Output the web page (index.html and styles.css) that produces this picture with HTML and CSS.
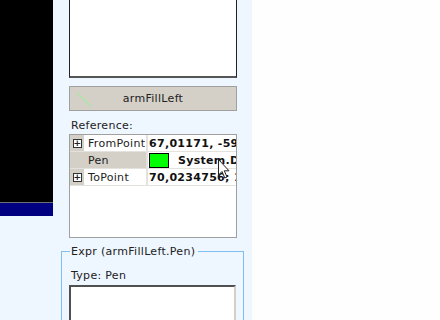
FILE: index.html
```html
<!DOCTYPE html>
<html>
<head>
    <title>armFillLeft</title>
    <link rel="stylesheet" href="styles.css">
</head>
<body>
    <div class="layout">
        <div class="preview">
            <div class="canvas"></div>
            <div class="scrollbar"></div>
        </div>

        <div class="panel">
            <div class="shape-box"></div>

            <button class="shape-button">
                <svg class="shape-icon" width="16" height="15" viewBox="0 0 16 15">
                    <line x1="1" y1="1" x2="15" y2="14" stroke="#a8e8a0" stroke-width="1.3"/>
                </svg>
                <span>armFillLeft</span>
            </button>

            <div class="label">Reference:</div>
            <div class="grid">
                <table>
                    <tr>
                        <td class="gutter"><span class="expander">+</span></td>
                        <td class="name">FromPoint</td>
                        <td class="value">67,01171, -59,61</td>
                    </tr>
                    <tr class="selected">
                        <td class="gutter"></td>
                        <td class="name">Pen</td>
                        <td class="value"><span class="swatch"></span><span class="pen-name">System.Drawing.Pen</span></td>
                    </tr>
                    <tr>
                        <td class="gutter"><span class="expander">+</span></td>
                        <td class="name">ToPoint</td>
                        <td class="value">70,0234756; 1,5</td>
                    </tr>
                </table>
                <svg class="cursor" width="13" height="20" viewBox="0 0 13 20">
                    <path d="M0.5 0.5 L0.5 16 L4 12.5 L6.8 19 L9 18 L6.3 11.8 L11 11.8 Z" fill="#fff" stroke="#222" stroke-width="1"/>
                </svg>
            </div>

            <fieldset class="expr">
                <legend>Expr (armFillLeft.Pen)</legend>
                <div class="type">Type: Pen</div>
                <div class="editor"></div>
            </fieldset>
        </div>

        <div class="blank"></div>
    </div>
</body>
</html>
```

FILE: styles.css
```css
body {
    margin: 0;
    padding: 0;
    font-family: "DejaVu Sans", Verdana, sans-serif;
    font-size: 11px;
    letter-spacing: 0.3px;
    color: #222;
    background-color: #fefefe;
    overflow: hidden;
}

.layout {
    display: flex;
    height: 320px;
}

.preview {
    width: 53px;
    background-color: #eef6ff;
}

.canvas {
    height: 202px;
    background-color: #000;
    border-bottom: 1px solid #707070;
}

.scrollbar {
    height: 13px;
    background-color: #000080;
}

.panel {
    width: 199px;
    background-color: #eef6ff;
    padding: 0 15px 0 16px;
    box-sizing: border-box;
}

.shape-box {
    height: 78px;
    background-color: #fff;
    border: 1px solid #222;
    border-top: none;
    border-bottom: 2px solid #555;
    box-sizing: border-box;
}

.shape-button {
    position: relative;
    display: block;
    width: 168px;
    height: 25px;
    margin-top: 8px;
    padding: 0;
    background-color: #d4d0c8;
    border: 1px solid #a0a0a0;
    font-family: "DejaVu Sans", Verdana, sans-serif;
    font-size: 11px;
    letter-spacing: 0.3px;
    color: #222;
    text-align: center;
}

.shape-icon {
    position: absolute;
    left: 6px;
    top: 5px;
}

.label {
    margin-top: 7px;
    padding-left: 2px;
    height: 16px;
    line-height: 16px;
}

.grid {
    position: relative;
    height: 104px;
    background-color: #fff;
    border: 1px solid #a0a0a0;
    box-sizing: border-box;
    overflow: hidden;
}

.grid table {
    border-collapse: collapse;
    table-layout: fixed;
    width: 180px;
}

.grid td {
    height: 16px;
    padding: 0;
    border-bottom: 1px solid #e4e2dc;
    white-space: nowrap;
    overflow: hidden;
}

.gutter {
    width: 14px;
    background-color: #d4d0c8;
    text-align: center;
}

.expander {
    display: inline-block;
    width: 7px;
    height: 7px;
    line-height: 6px;
    border: 1px solid #333;
    background-color: #fff;
    font-size: 9px;
    font-weight: bold;
    letter-spacing: 0;
    vertical-align: middle;
}

.name {
    width: 58px;
    padding-left: 4px !important;
    border-right: 2px solid #e4e2dc;
}

.selected .name {
    background-color: #d4d0c8;
}

.value {
    padding-left: 1px !important;
    font-weight: bold;
    color: #111;
}

.swatch {
    display: inline-block;
    width: 18px;
    height: 13px;
    background-color: #00ff00;
    border: 1px solid #000;
    vertical-align: middle;
    margin-right: 9px;
}

.pen-name {
    vertical-align: middle;
}

.cursor {
    position: absolute;
    left: 148px;
    top: 24px;
}

.expr {
    margin: 7px 0 0 -8px;
    padding: 0 7px;
    width: 183px;
    box-sizing: border-box;
    border: 1px solid #7fbef0;
    border-bottom: none;
}

.expr legend {
    padding: 0 3px 0 1px;
    margin-left: 1px;
}

.type {
    margin-top: 10px;
    padding-left: 2px;
    height: 16px;
    line-height: 16px;
}

.editor {
    height: 40px;
    margin-top: 1px;
    background-color: #fff;
    border: 2px solid #505050;
    border-right-color: #d4d0c8;
    border-bottom: none;
}

.blank {
    flex: 1;
    background-color: #fefefe;
}
```
